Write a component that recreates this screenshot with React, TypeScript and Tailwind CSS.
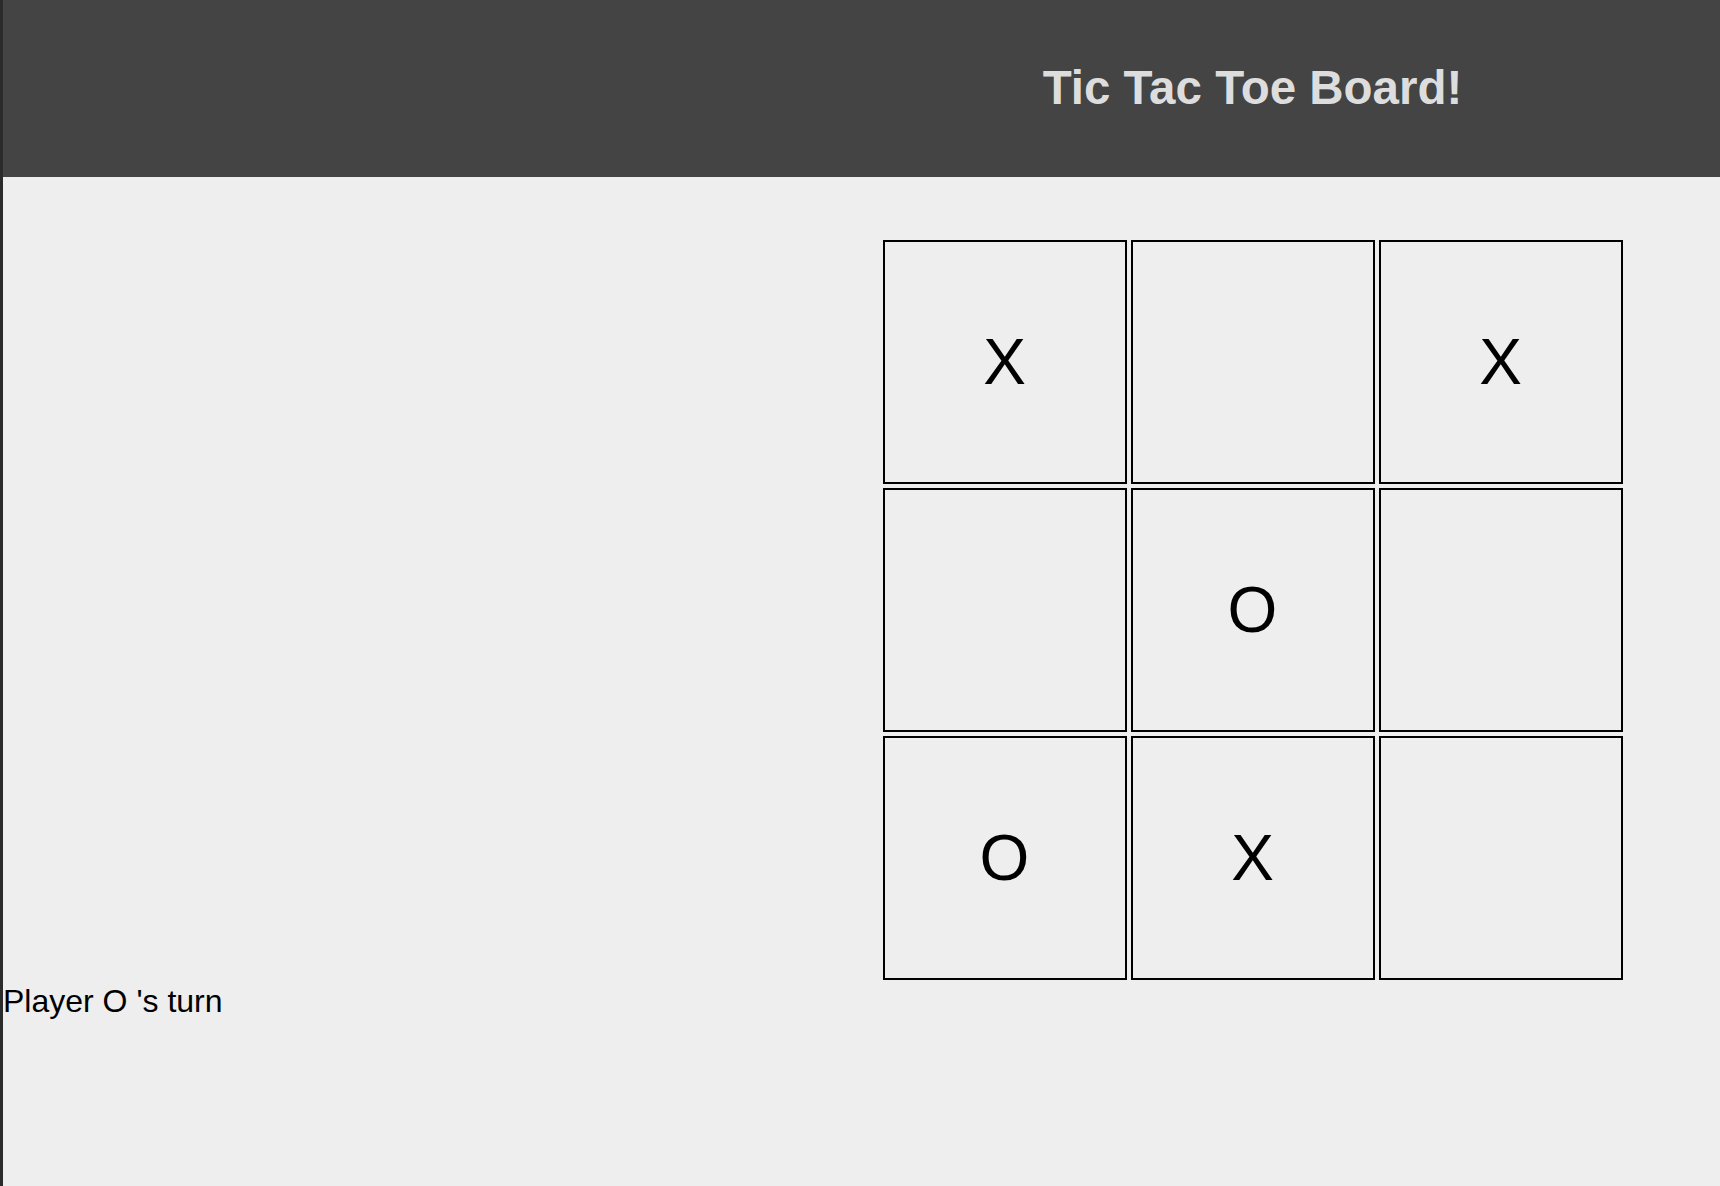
import React from "react";

const board: string[] = ["X", "", "X", "", "O", "", "O", "X", ""];

const Cell: React.FC<{ value: string }> = ({ value }) => {
  return (
    <div className="w-[244px] h-[244px] border-2 border-black flex items-center justify-center text-[64px] text-black">
      {value}
    </div>
  );
};

const App: React.FC = () => {
  return (
    <div className="flex min-h-screen bg-[#eeeeee] font-['Liberation_Sans',Arial,sans-serif]">
      <div className="w-[3px] shrink-0 bg-[#2b2b2b]" />
      <div className="flex-1 flex flex-col">
        <header className="h-[177px] bg-[#444444] grid grid-cols-[782px_1fr]">
          <div />
          <div className="flex items-center justify-center pb-[3px]">
            <h1 className="text-[47.5px] leading-[55px] font-bold text-[#dddddd]">
              Tic Tac Toe Board!
            </h1>
          </div>
        </header>
        <div className="grid grid-cols-[782px_1fr] pt-[63px]">
          <div />
          <div className="flex justify-center">
            <div className="grid grid-cols-3 gap-[4px]">
              {board.map((v, i) => (
                <Cell key={i} value={v} />
              ))}
            </div>
          </div>
        </div>
        <p className="mt-[3px] text-[32px] leading-[37px] text-black">
          Player O 's turn
        </p>
      </div>
    </div>
  );
};

export default App;
